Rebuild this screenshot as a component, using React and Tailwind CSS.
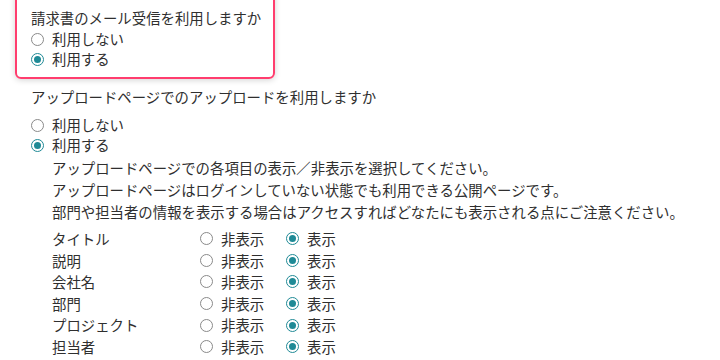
import React from 'react';

const fields = ['タイトル', '説明', '会社名', '部門', 'プロジェクト', '担当者'];

const Radio = ({ checked }) =>
  checked ? (
    <span className="w-[13px] h-[13px] rounded-full border-[1.5px] border-[#1f8a96] flex items-center justify-center shrink-0">
      <span className="w-[7px] h-[7px] rounded-full bg-[#1f8a96]" />
    </span>
  ) : (
    <span className="w-[13px] h-[13px] rounded-full border border-[#8a8a8a] bg-white shrink-0" />
  );

const Option = ({ checked, label, className = '' }) => (
  <label className={`flex items-center gap-[8px] ${className}`}>
    <Radio checked={checked} />
    <span>{label}</span>
  </label>
);

const App = () => {
  return (
    <div
      className="min-h-screen bg-white pl-[15px] text-[14.4px] text-[#2f2f2f] overflow-hidden"
      style={{ fontFamily: '"Noto Sans CJK JP", "Noto Sans", sans-serif' }}
    >
      <div className="-mt-3 w-[260px] rounded-md border-2 border-[#ff3d6e] shadow-[0_1px_6px_rgba(0,0,0,0.18)] pl-[14px] pt-[17px] pb-[8px]">
        <div className="leading-[22px]">請求書のメール受信を利用しますか</div>
        <div className="leading-[20px]">
          <Option label="利用しない" />
          <Option checked label="利用する" />
        </div>
      </div>

      <div className="pl-[16px] mt-[7px]">
        <div className="leading-[22px]">アップロードページでのアップロードを利用しますか</div>
        <div className="mt-[7px] leading-[20px]">
          <Option label="利用しない" />
          <Option checked label="利用する" />
        </div>
        <div className="pl-[21px] leading-[22px] mt-[2px]">
          <p>アップロードページでの各項目の表示／非表示を選択してください。</p>
          <p>アップロードページはログインしていない状態でも利用できる公開ページです。</p>
          <p>部門や担当者の情報を表示する場合はアクセスすればどなたにも表示される点にご注意ください。</p>
          <div className="mt-[5px] leading-[21.6px]">
            {fields.map((f) => (
              <div key={f} className="flex items-center">
                <span className="w-[148px]">{f}</span>
                <Option label="非表示" className="w-[86px]" />
                <Option checked label="表示" />
              </div>
            ))}
          </div>
        </div>
      </div>
      <div className="mt-[2px] w-[272px] h-[2px] bg-[#f2f2f2]" />
    </div>
  );
};

export default App;
